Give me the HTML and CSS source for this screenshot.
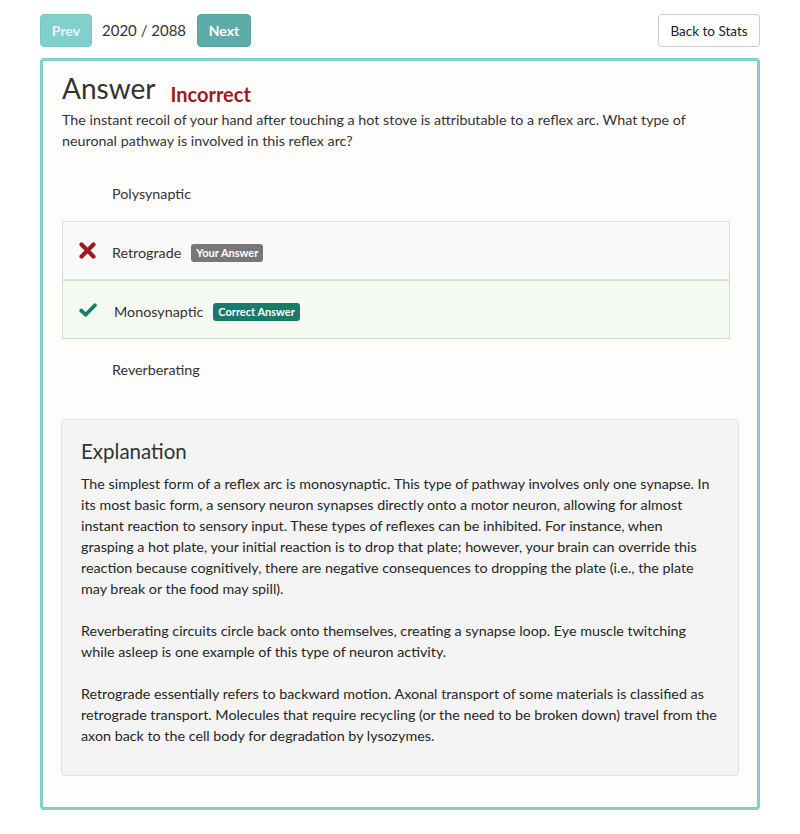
FILE: index.html
```html
<!DOCTYPE html>
<html>
<head>
<meta charset="utf-8">
<link rel="stylesheet" href="styles.css">
</head>
<body>
<div class="page">
  <div class="toolbar">
    <div class="nav">
      <button class="btn btn-prev">Prev</button>
      <span class="counter">2020 / 2088</span>
      <button class="btn btn-next">Next</button>
    </div>
    <button class="btn btn-back">Back to Stats</button>
  </div>
  <div class="card">
    <div class="title-row">
      <h1 class="title">Answer</h1>
      <span class="status">Incorrect</span>
    </div>
    <p class="question">The instant recoil of your hand after touching a hot stove is attributable to a reflex arc. What type of neuronal pathway is involved in this reflex arc?</p>
    <div class="options">
      <div class="option">
        <span class="icon"></span>
        <span class="label">Polysynaptic</span>
      </div>
      <div class="option option-wrong">
        <span class="icon"><svg width="17" height="17" viewBox="0 0 17 17"><path d="M2.5 2.5 L14.5 14.5 M14.5 2.5 L2.5 14.5" stroke="#9b1b1e" stroke-width="4.2" stroke-linecap="round"/></svg></span>
        <span class="label">Retrograde</span>
        <span class="badge badge-grey">Your Answer</span>
      </div>
      <div class="option option-right">
        <span class="icon icon-check"><svg width="19" height="16" viewBox="0 0 19 16"><path d="M2.4 8.6 L7 13 L16.8 3" fill="none" stroke="#187a6c" stroke-width="4" stroke-linecap="round" stroke-linejoin="round"/></svg></span>
        <span class="label">Monosynaptic</span>
        <span class="badge badge-green">Correct Answer</span>
      </div>
      <div class="option">
        <span class="icon"></span>
        <span class="label">Reverberating</span>
      </div>
    </div>
    <div class="explanation">
      <h2 class="exp-title">Explanation</h2>
      <p>The simplest form of a reflex arc is monosynaptic. This type of pathway involves only one synapse. In its most basic form, a sensory neuron synapses directly onto a motor neuron, allowing for almost instant reaction to sensory input. These types of reflexes can be inhibited. For instance, when grasping a hot plate, your initial reaction is to drop that plate; however, your brain can override this reaction because cognitively, there are negative consequences to dropping the plate (i.e., the plate may break or the food may spill).</p>
      <p>Reverberating circuits circle back onto themselves, creating a synapse loop. Eye muscle twitching while asleep is one example of this type of neuron activity.</p>
      <p>Retrograde essentially refers to backward motion. Axonal transport of some materials is classified as retrograde transport. Molecules that require recycling (or the need to be broken down) travel from the axon back to the cell body for degradation by lysozymes.</p>
    </div>
  </div>
</div>
</body>
</html>
```

FILE: styles.css
```css
* { box-sizing: border-box; }
html, body {
  margin: 0;
  padding: 0;
  background: #ffffff;
}
body {
  font-family: Lato, "Open Sans", sans-serif;
  color: #333333;
}
.page {
  width: 720px;
  margin-left: 40px;
  padding-top: 14px;
}
.toolbar {
  display: flex;
  justify-content: space-between;
  align-items: center;
  height: 33px;
}
.nav {
  display: flex;
  align-items: center;
}
.btn {
  font-family: Lato, "Open Sans", sans-serif;
  height: 33px;
  border-radius: 4px;
  font-size: 14px;
  padding: 0;
  cursor: pointer;
}
.btn-prev {
  width: 52px;
  background: #80d0cd;
  border: 1px solid #78c7c4;
  color: #eaf7f6;
  font-weight: 700;
}
.btn-next {
  width: 54px;
  background: #5eacaa;
  border: 1px solid #57a4a2;
  color: #ffffff;
  font-weight: 700;
}
.counter {
  font-size: 15px;
  color: #333;
  margin: 0 10px 0 10px;
  width: 85px;
  position: relative;
  top: -1px;
}
.btn-back {
  width: 102px;
  background: #ffffff;
  border: 1px solid #cccccc;
  color: #222;
  font-size: 13.5px;
}
.card {
  margin-top: 11px;
  border: 3px solid #7fcfcb;
  border-radius: 4px;
  background: #fefdfb;
  padding: 6px 18px 31px 18px;
  height: 752px;
}
.title-row {
  display: flex;
  align-items: flex-end;
  height: 38px;
}
.title {
  font-size: 28px;
  font-weight: 400;
  margin: 0;
  line-height: 34px;
  color: #333;
  padding-left: 1px;
}
.status {
  font-size: 20px;
  font-weight: 700;
  color: #9b1b1e;
  margin-left: 15px;
  line-height: 24px;
  position: relative;
  top: 1px;
}
.question {
  font-size: 14.3px;
  line-height: 21px;
  margin: 4px 0 0 1px;
  color: #333;
}
.options {
  margin: 12px 9px 0 1px;
}
.option {
  display: flex;
  align-items: center;
  height: 58px;
  padding-left: 16px;
  border: 1px solid transparent;
  font-size: 14.3px;
  color: #333;
}
.option .icon {
  width: 18px;
  height: 17px;
  margin-right: 15px;
  display: flex;
  align-items: center;
}
.option .icon svg { display: block; }
.option-wrong {
  background: #f9f9f9;
  border-color: #dcdcdc;
  height: 59px;
}
.option-right {
  background: #f4f9f2;
  border-color: #c8e5c1;
  height: 59px;
}
.option .icon-check { margin-right: 17px; }
.label { margin-top: 3px; }
.badge {
  display: inline-block;
  font-size: 11px;
  font-weight: 700;
  color: #fff;
  border-radius: 3px;
  padding: 2px 5px 3px;
  margin-left: 10px;
  line-height: 13px;
  margin-top: 4px;
}
.badge-grey { background: #777777; }
.badge-green { background: #177a6b; }
.explanation {
  margin-top: 22px;
  background: #f4f4f4;
  border: 1px solid #e0e0e0;
  border-radius: 4px;
  padding: 17px 20px 20px 19px;
  height: 357px;
}
.exp-title {
  font-size: 20.5px;
  font-weight: 400;
  margin: 0 0 8px 0;
  line-height: 28px;
  color: #333;
}
.explanation p {
  font-size: 14.3px;
  line-height: 21px;
  margin: 0 0 21px 0;
  color: #262626;
}
```
